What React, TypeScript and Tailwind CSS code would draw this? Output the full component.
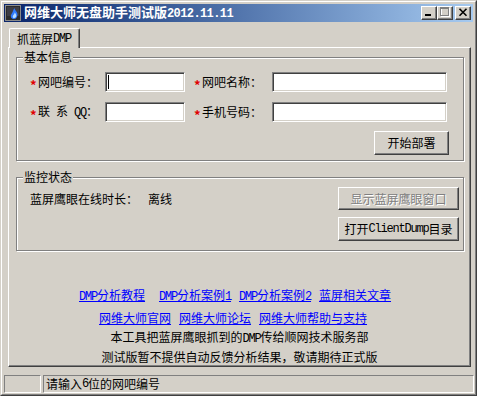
import type { ReactNode } from "react";

const font = "font-['Noto_Sans_CJK_SC','Noto_Sans',sans-serif]";

const raised =
  "border border-t-white border-l-white border-r-[#404040] border-b-[#404040] shadow-[inset_-1px_-1px_0_#808080]";
const sunken =
  "border border-t-[#808080] border-l-[#808080] border-r-white border-b-white shadow-[inset_1px_1px_0_#404040,inset_-1px_-1px_0_#d4d0c8]";
const etched = "border border-[#808080] shadow-[inset_1px_1px_0_#fff,1px_1px_0_#fff]";

// SimSun-like half width latin
const M = ({ children }: { children: ReactNode }) => (
  <span className="font-['Liberation_Mono',monospace] text-[12px] tracking-[-1.2px] whitespace-pre">{children}</span>
);

const TitleIcon = () => (
  <svg width="16" height="16" viewBox="0 0 16 16" className="shrink-0">
    <rect x="0.5" y="0.5" width="15" height="15" fill="#2b2b2b" stroke="#8a8a8a" />
    <rect x="2" y="2" width="12" height="9" fill="#3c3c44" />
    <path d="M9 14c-3 0-4-2.5-2.5-5C8 7 8 5 9.5 3c0 2 3 3.5 3 6.5 0 2.5-1.5 4.5-3.5 4.5z" fill="#2f7bff" />
    <path d="M9.3 13c-1.4 0-2-1.2-1.2-2.6.7-1 1.4-1.6 1.6-3 .8 1.2 1.6 2 1.6 3.4 0 1.2-.8 2.2-2 2.2z" fill="#b8dcff" />
  </svg>
);

const CaptionButton = ({ kind }: { kind: "min" | "max" | "close" }) => (
  <div className={`w-[16px] h-[14px] bg-[#d4d0c8] ${raised}`}>
    <svg width="14" height="12" viewBox="0 0 14 12" shapeRendering="crispEdges">
      {kind === "min" && <rect x="3" y="7" width="6" height="2" fill="#000" />}
      {kind === "max" && (
        <g>
          <rect x="3.5" y="1.5" width="8" height="8" fill="none" stroke="#fff" />
          <rect x="2.5" y="0.5" width="8" height="8" fill="none" stroke="#808080" />
          <rect x="2" y="0" width="9" height="2" fill="#808080" />
        </g>
      )}
      {kind === "close" && (
        <g shapeRendering="auto" stroke="#000" strokeWidth="1.6">
          <path d="M3.5 1.8L10.5 8.8M10.5 1.8L3.5 8.8" />
        </g>
      )}
    </svg>
  </div>
);

const Field = ({ width, caret }: { width: string; caret?: boolean }) => (
  <div className={`${width} h-[20px] bg-white flex items-center ${sunken}`}>
    {caret && <span className="ml-[2px] w-px h-[14px] bg-black" />}
  </div>
);

const Label = ({ width, children, className = "" }: { width: string; children: ReactNode; className?: string }) => (
  <div className={`${width} flex items-center whitespace-pre ${className}`}>
    <span className="text-[#e00000] w-[8px] text-[13px] font-bold translate-y-[3px]">*</span>
    <span>{children}</span>
  </div>
);

const Legend = ({ text }: { text: string }) => (
  <span className="absolute left-[6px] top-[-9px] px-[1px] bg-[#d4d0c8] leading-[16px]">{text}</span>
);

const Link = ({ children }: { children: ReactNode }) => (
  <div className="w-[80px] whitespace-nowrap">
    <span className="text-[#0000ff] underline">{children}</span>
  </div>
);

export default function App() {
  return (
    <div className={`w-[477px] h-[396px] bg-[#d4d0c8] text-[12px] leading-[16px] text-black ${font}`}>
      <div className="h-full border border-t-[#d4d0c8] border-l-[#d4d0c8] border-r-[#404040] border-b-[#404040]">
        <div className="h-full border border-t-white border-l-white border-r-[#808080] border-b-[#808080] p-[2px] flex flex-col">
          {/* Title bar */}
          <div className="h-[18px] flex items-center bg-gradient-to-r from-[#0a246a] to-[#a6caf0] pl-[1px] pr-[2px]">
            <TitleIcon />
            <span className="ml-[3px] text-white font-bold text-[13px] whitespace-nowrap">
              网维大师无盘助手测试版
              <span className="font-['Liberation_Mono',monospace] text-[12px] tracking-[-0.6px]">2012.11.11</span>
            </span>
            <div className="ml-auto flex items-center">
              <CaptionButton kind="min" />
              <CaptionButton kind="max" />
              <div className="w-[2px]" />
              <CaptionButton kind="close" />
            </div>
          </div>

          {/* Tab strip */}
          <div className="mt-[6px] ml-[5px] mr-[2px] flex h-[19px]">
            <div className="relative z-10 h-[20px] w-[71px] bg-[#d4d0c8] border-t border-l border-t-white border-l-white border-r border-r-[#404040] shadow-[inset_-1px_0_0_#808080] rounded-t-[2px] flex items-start pt-[2px] pl-[7px] whitespace-nowrap">
              抓蓝屏<M>DMP</M>
            </div>
          </div>

          {/* Tab panel */}
          <div className={`ml-[4px] mr-[2px] h-[320px] ${raised} flex flex-col`}>
            {/* 基本信息 */}
            <div className={`relative ml-[7px] mr-[6px] mt-[9px] h-[105px] ${etched} pt-[14px] pl-[13px]`}>
              <Legend text="基本信息" />
              <div className="flex items-center h-[20px]">
                <Label width="w-[75px]">网吧编号：</Label>
                <Field width="w-[80px]" caret />
                <Label width="w-[78px]" className="ml-[9px]">网吧名称：</Label>
                <Field width="w-[175px]" />
              </div>
              <div className="flex items-center h-[20px] mt-[10px]">
                <Label width="w-[75px]">
                  联<M> </M>系<M> QQ</M>：
                </Label>
                <Field width="w-[80px]" />
                <Label width="w-[78px]" className="ml-[9px]">手机号码：</Label>
                <Field width="w-[175px]" />
              </div>
              <div className="flex justify-end pr-[14px] mt-[9px]">
                <div className={`w-[75px] h-[24px] ${raised} flex items-center justify-center`}>开始部署</div>
              </div>
            </div>

            {/* 监控状态 */}
            <div className={`relative ml-[7px] mr-[6px] mt-[16px] h-[74px] ${etched} pt-[9px] pl-[13px] pr-[4px] flex`}>
              <Legend text="监控状态" />
              <div className="mt-[4px] flex whitespace-nowrap">
                <span>蓝屏鹰眼在线时长：</span>
                <span className="ml-[10px]">离线</span>
              </div>
              <div className="ml-auto flex flex-col gap-[7px]">
                <div className={`w-[121px] h-[23px] ${raised} flex items-center justify-center text-[#808080] [text-shadow:1px_1px_0_#fff]`}>
                  显示蓝屏鹰眼窗口
                </div>
                <div className={`w-[121px] h-[24px] ${raised} flex items-center justify-center whitespace-nowrap`}>
                  打开<M>ClientDump</M>目录
                </div>
              </div>
            </div>

            {/* Links */}
            <div className="mt-[36px] pl-[70px] flex">
              <Link><M>DMP</M>分析教程</Link>
              <Link><M>DMP</M>分析案例<M>1</M></Link>
              <Link><M>DMP</M>分析案例<M>2</M></Link>
              <Link>蓝屏相关文章</Link>
            </div>
            <div className="mt-[5px] pl-[90px] flex">
              <Link>网维大师官网</Link>
              <Link>网维大师论坛</Link>
              <Link>网维大师帮助与支持</Link>
            </div>
            <div className="mt-[2px] flex flex-col items-center leading-[18px]">
              <span>本工具把蓝屏鹰眼抓到的<M>DMP</M>传给顺网技术服务部</span>
              <span>测试版暂不提供自动反馈分析结果，敬请期待正式版</span>
            </div>
          </div>

          {/* Status bar */}
          <div className="mt-[8px] h-[18px] flex gap-[2px] mr-[-1px]">
            <div className="w-[37px] border border-t-[#808080] border-l-[#808080] border-r-white border-b-white" />
            <div className="flex-1 border border-t-[#808080] border-l-[#808080] border-r-white border-b-white pl-[2px] flex items-center">
              请输入<M>6</M>位的网吧编号
            </div>
          </div>
        </div>
      </div>
    </div>
  );
}
